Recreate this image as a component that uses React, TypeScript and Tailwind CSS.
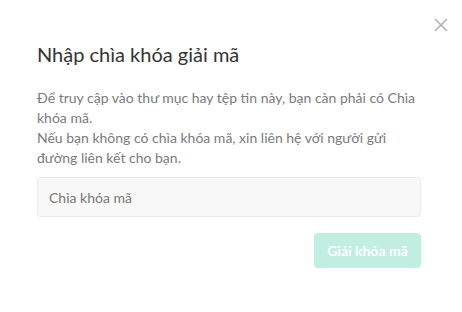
import React from 'react';

export default function App() {
  return (
    <div className="relative w-[462px] h-[312px] bg-white font-['Lato','Liberation_Sans',sans-serif]">
      {/* close button */}
      <button className="absolute right-[13px] top-[17px] w-[16px] h-[16px] flex items-center justify-center">
        <svg width="16" height="16" viewBox="0 0 16 16" fill="none" stroke="#b3b3b3" strokeWidth="1.6">
          <path d="M2 2 L14 14 M14 2 L2 14" />
        </svg>
      </button>

      <div className="pt-[40px] px-[37px] pr-[41px]">
        <h2 className="text-[20px] leading-[28px] text-[#333333] font-normal">Nhập chìa khóa giải mã</h2>

        <div className="mt-[20px] text-[14px] leading-[20px] text-[#7a7a7a]">
          <p>Để truy cập vào thư mục hay tệp tin này, bạn càn phải có Chìa khóa mã.</p>
          <p>Nếu bạn không có chìa khóa mã, xin liên hệ với người gửi đường liên kết cho bạn.</p>
        </div>

        <input
          type="text"
          placeholder="Chìa khóa mã"
          className="mt-[9px] w-full h-[40px] px-[11px] rounded-[4px] border border-[#ebebeb] bg-[#f8f8f8] text-[14px] text-[#555] placeholder:text-[#777] outline-none"
        />

        <div className="mt-[16px] flex justify-end">
          <button
            disabled
            className="h-[35px] w-[107px] rounded-[4px] bg-[#c1eee0] text-white text-[14px] font-bold"
          >
            Giải khóa mã
          </button>
        </div>
      </div>
    </div>
  );
}
